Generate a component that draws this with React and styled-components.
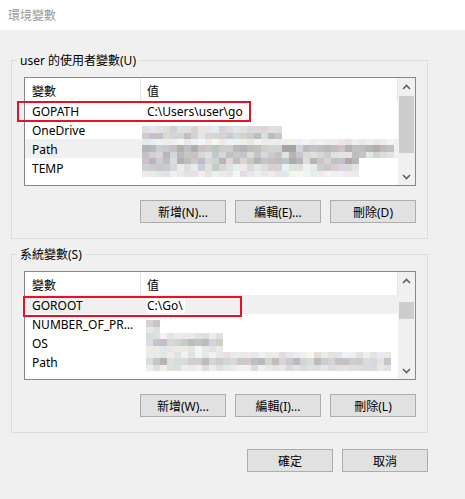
import styled, { createGlobalStyle } from "styled-components";

const GlobalStyle = createGlobalStyle`
  html, body {
    margin: 0;
    padding: 0;
  }
  body {
    font-family: "Noto Sans", "Noto Sans CJK TC", sans-serif;
    font-size: 12px;
    color: #000;
    background: #f0f0f0;
  }
`;

// seeded random so the blurred mosaic looks the same every run
function rng(seed) {
  let a = seed;
  return () => {
    a |= 0;
    a = (a + 0x6d2b79f5) | 0;
    let t = Math.imul(a ^ (a >>> 15), 1 | a);
    t = (t + Math.imul(t ^ (t >>> 7), 61 | t)) ^ t;
    return ((t ^ (t >>> 14)) >>> 0) / 4294967296;
  };
}

function mosaicCells(seed, cols, tones) {
  const rand = rng(seed);
  const cells = [];
  tones.forEach((tone, r) => {
    for (let c = 0; c < cols; c++) {
      if (!tone) {
        cells.push({ key: r + "-" + c, color: "transparent" });
        continue;
      }
      const g = tone[0] + rand() * (tone[1] - tone[0]);
      const tint = () => Math.round(Math.min(255, g + (rand() - 0.5) * 14));
      cells.push({ key: r + "-" + c, color: `rgb(${tint()},${tint()},${tint()})` });
    }
  });
  return cells;
}

const userVars = [
  { name: "GOPATH", value: "C:\\Users\\user\\go" },
  { name: "OneDrive", mosaic: { seed: 11, cols: 20, x: 0, tones: [null, [205, 238], [185, 228]] } },
  { name: "Path", band: true, mosaic: { seed: 23, cols: 36, x: 0, tones: [[232, 244], [165, 212], [185, 228]] } },
  { name: "TEMP", mosaic: { seed: 37, cols: 31, x: 0, tones: [[175, 222], [200, 240], [226, 242]] } },
];

const systemVars = [
  { name: "GOROOT", value: "C:\\Go\\", band: true, boxed: true },
  { name: "NUMBER_OF_PROCESSORS", mosaic: { seed: 5, cols: 2, x: 4, tones: [null, [195, 220], [212, 232]] } },
  { name: "OS", mosaic: { seed: 51, cols: 11, x: 4, tones: [[218, 242], [190, 225], [226, 242]] } },
  { name: "Path", mosaic: { seed: 77, cols: 35, x: 4, tones: [[226, 246], [182, 225], [215, 240]] } },
];

function Chevron({ down }) {
  return (
    <svg width="9" height="6" viewBox="0 0 9 6">
      <path
        d={down ? "M1 1 L4.5 4.5 L8 1" : "M1 5 L4.5 1.5 L8 5"}
        fill="none"
        stroke="#606060"
        strokeWidth="1.6"
      />
    </svg>
  );
}

function Mosaic({ seed, cols, x, tones }) {
  const cells = mosaicCells(seed, cols, tones);
  return (
    <MosaicGrid $cols={cols} $x={x}>
      {cells.map((c) => (
        <Cell key={c.key} style={{ background: c.color }} />
      ))}
    </MosaicGrid>
  );
}

function VarList({ rows, mark, thumb }) {
  return (
    <List>
      <ListBody>
        <Header>
          <HeadName>變數</HeadName>
          <HeadValue>值</HeadValue>
        </Header>
        {rows.map((row) => (
          <Row key={row.name} $band={row.band}>
            <NameCell>{row.name}</NameCell>
            <ValueCell>
              {row.value && <ValueText $boxed={row.boxed}>{row.value}</ValueText>}
              {row.mosaic && <Mosaic {...row.mosaic} />}
            </ValueCell>
          </Row>
        ))}
      </ListBody>
      <ScrollBar>
        <Arrow>
          <Chevron />
        </Arrow>
        <Thumb $top={thumb.top} $h={thumb.h} />
        <Track />
        <Arrow>
          <Chevron down />
        </Arrow>
      </ScrollBar>
      <Mark $left={mark.left} $top={mark.top} $w={mark.w} />
    </List>
  );
}

function App() {
  return (
    <Window>
      <GlobalStyle />
      <TitleBar>環境變數</TitleBar>
      <Body>
        <Group>
          <Legend>user 的使用者變數(U)</Legend>
          <GroupInner>
            <VarList rows={userVars} mark={{ left: -8, top: 23, w: 234 }} thumb={{ top: 1, h: 57 }} />
            <ButtonRow>
              <Button>新增(N)...</Button>
              <Button>編輯(E)...</Button>
              <Button>刪除(D)</Button>
            </ButtonRow>
          </GroupInner>
        </Group>
        <Group>
          <Legend>系統變數(S)</Legend>
          <GroupInner>
            <VarList rows={systemVars} mark={{ left: -2, top: 24, w: 219 }} thumb={{ top: 13, h: 17 }} />
            <ButtonRow>
              <Button>新增(W)...</Button>
              <Button>編輯(I)...</Button>
              <Button>刪除(L)</Button>
            </ButtonRow>
          </GroupInner>
        </Group>
        <Footer>
          <Button>確定</Button>
          <Button>取消</Button>
        </Footer>
      </Body>
    </Window>
  );
}

export default App;

const Window = styled.div`
  width: 465px;
  height: 499px;
  display: flex;
  flex-direction: column;
  background: #f0f0f0;
  overflow: hidden;
`;

const TitleBar = styled.div`
  flex: none;
  height: 30px;
  display: flex;
  align-items: center;
  padding-left: 8px;
  background: #fff;
  color: #9a9a9a;
  font-size: 12px;
`;

const Body = styled.div`
  flex: 1;
  display: flex;
  flex-direction: column;
  padding: 22px 0 0 11px;
`;

const Group = styled.fieldset`
  width: 417px;
  box-sizing: border-box;
  margin: 0;
  padding: 0;
  min-inline-size: 0;
  border: 1px solid #dcdcdc;

  & + & {
    margin-top: 7px;
  }
`;

const Legend = styled.legend`
  margin-left: 5px;
  padding: 1px 3px 0;
  line-height: 16px;
`;

const GroupInner = styled.div`
  padding: 8px 11px 15px 12px;
`;

const List = styled.div`
  position: relative;
  height: 109px;
  box-sizing: border-box;
  border: 1px solid #828790;
  background: #fff;
  display: flex;
`;

const ListBody = styled.div`
  flex: 1;
  overflow: hidden;
`;

const Header = styled.div`
  height: 23px;
  display: flex;
  align-items: center;
`;

const HeadName = styled.div`
  width: 116px;
  height: 100%;
  display: flex;
  align-items: center;
  padding: 2px 0 0 7px;
  box-sizing: border-box;
  border-right: 1px solid #e5e5e5;
`;

const HeadValue = styled.div`
  flex: 1;
  height: 100%;
  display: flex;
  align-items: center;
  padding: 2px 0 0 6px;
  box-sizing: border-box;
  border-right: 1px solid #e5e5e5;
`;

const Row = styled.div`
  height: 19px;
  display: flex;
  align-items: center;
  background: ${(p) => (p.$band ? "#f0f0f0" : "transparent")};
  white-space: nowrap;
`;

const NameCell = styled.div`
  width: 116px;
  flex: none;
  padding: 2px 0 0 7px;
  box-sizing: border-box;
  overflow: hidden;
  text-overflow: ellipsis;
`;

const ValueCell = styled.div`
  flex: 1;
  height: 100%;
  display: flex;
  align-items: center;
  padding-left: 1px;
  overflow: hidden;
`;

const ValueText = styled.span`
  margin-left: ${(p) => (p.$boxed ? "4px" : "5px")};
  padding: ${(p) => (p.$boxed ? "2px 2px 0 1px" : "2px 0 0")};
  height: 17px;
  box-sizing: border-box;
  line-height: 15px;
  background: ${(p) => (p.$boxed ? "#fff" : "transparent")};
`;

const MosaicGrid = styled.div`
  display: grid;
  grid-template-columns: repeat(${(p) => p.$cols}, 7px);
  grid-template-rows: 6px 7px 6px;
  margin-left: ${(p) => p.$x}px;
  height: 19px;
`;

const Cell = styled.div``;

const ScrollBar = styled.div`
  width: 17px;
  flex: none;
  display: flex;
  flex-direction: column;
  background: #f0f0f0;
`;

const Arrow = styled.div`
  height: 17px;
  flex: none;
  display: flex;
  align-items: center;
  justify-content: center;
`;

const Thumb = styled.div`
  flex: none;
  margin: ${(p) => p.$top}px 1px 0;
  height: ${(p) => p.$h}px;
  background: #cdcdcd;
`;

const Track = styled.div`
  flex: 1;
`;

const Mark = styled.div`
  position: absolute;
  left: ${(p) => p.$left}px;
  top: ${(p) => p.$top}px;
  width: ${(p) => p.$w}px;
  height: 21px;
  box-sizing: border-box;
  border: 2px solid #e81123;
  pointer-events: none;
`;

const ButtonRow = styled.div`
  display: flex;
  justify-content: flex-end;
  gap: 9px;
  margin-top: 14px;
`;

const Footer = styled.div`
  width: 417px;
  display: flex;
  justify-content: flex-end;
  gap: 9px;
  margin-top: 16px;
`;

const Button = styled.button`
  width: 86px;
  height: 23px;
  padding: 0;
  box-sizing: border-box;
  background: #e1e1e1;
  border: 1px solid #adadad;
  border-radius: 0;
  font-family: inherit;
  font-size: 12px;
  color: #000;
`;
